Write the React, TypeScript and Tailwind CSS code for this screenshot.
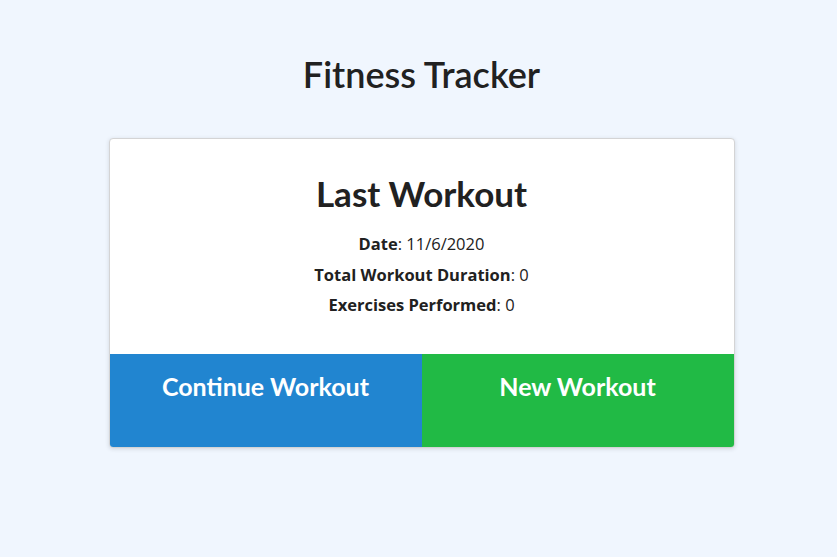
import React from 'react';

export default function App() {
  const stats = [
    { label: 'Date', value: '11/6/2020' },
    { label: 'Total Workout Duration', value: '0' },
    { label: 'Exercises Performed', value: '0' },
  ];

  return (
    <div className="min-h-[557px] bg-[#f0f6fe] font-['Lato','Liberation_Sans',sans-serif] text-[#212121]">
      <div className="flex flex-col items-center pt-[51px] pl-[6px]">
        <h1 className="text-[36px] font-semibold leading-[46px]">Fitness Tracker</h1>

        <div className="mt-[41px] w-[626px] overflow-hidden rounded-[4px] border border-[#d4d4d5] bg-white shadow-[0_1px_4px_rgba(34,36,38,0.15)]">
          <div className="flex flex-col items-center pt-[33px] pb-[33px]">
            <h2 className="text-[35px] font-bold leading-[42px]">Last Workout</h2>
            <div className="mt-[15px] flex flex-col items-center font-['Open_Sans','Noto_Sans',sans-serif]">
              {stats.map((s) => (
                <p key={s.label} className="text-[16.5px] leading-[30.5px]">
                  <span className="font-bold">{s.label}</span>: {s.value}
                </p>
              ))}
            </div>
          </div>

          <div className="grid grid-cols-2">
            <button className="h-[93px] bg-[#2185d0] pt-[14px] text-[25px] font-bold text-white flex justify-center items-start">
              Continue Workout
            </button>
            <button className="h-[93px] bg-[#21ba45] pt-[14px] text-[25px] font-bold text-white flex justify-center items-start">
              New Workout
            </button>
          </div>
        </div>
      </div>
    </div>
  );
}
